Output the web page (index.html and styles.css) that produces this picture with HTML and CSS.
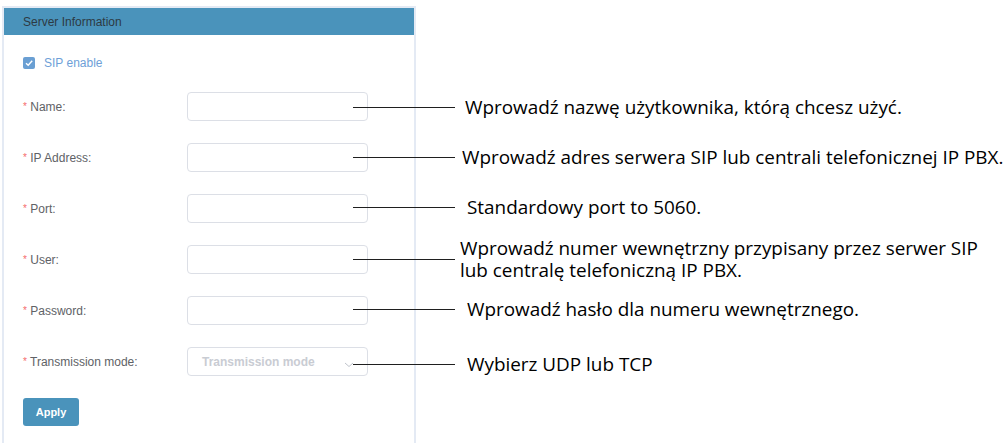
FILE: index.html
```html
<!DOCTYPE html>
<html lang="pl">
<head>
<meta charset="utf-8">
<title>Server Information</title>
<link rel="stylesheet" href="styles.css">
</head>
<body>
<div class="stage">
  <section class="panel">
    <header class="panel-head">Server Information</header>
    <div class="panel-body">
      <label class="check">
        <span class="box"><svg width="12" height="12" viewBox="0 0 12 12"><path d="M3 6.2 L5.2 8.3 L9.2 3.8" fill="none" stroke="#fff" stroke-width="1.4"/></svg></span>
        <span class="check-text">SIP enable</span>
      </label>
      <div class="form">
        <div class="row"><span class="label"><i>*</i> Name:</span><span class="input"></span></div>
        <div class="row"><span class="label"><i>*</i> IP Address:</span><span class="input"></span></div>
        <div class="row"><span class="label"><i>*</i> Port:</span><span class="input"></span></div>
        <div class="row"><span class="label"><i>*</i> User:</span><span class="input"></span></div>
        <div class="row"><span class="label"><i>*</i> Password:</span><span class="input"></span></div>
        <div class="row"><span class="label"><i>*</i> Transmission mode:</span><span class="input select"><span class="placeholder">Transmission mode</span><svg class="chev" width="10" height="6" viewBox="0 0 10 6"><path d="M1 1 L5 4.5 L9 1" fill="none" stroke="#c0c4cc" stroke-width="1"/></svg></span></div>
      </div>
      <button class="apply">Apply</button>
    </div>
  </section>
  <div class="callouts">
    <div class="callout c1"><span class="line"></span><span class="note">Wprowadź nazwę użytkownika, którą chcesz użyć.</span></div>
    <div class="callout c2"><span class="line"></span><span class="note">Wprowadź adres serwera SIP lub centrali telefonicznej IP PBX.</span></div>
    <div class="callout c3"><span class="line"></span><span class="note">Standardowy port to 5060.</span></div>
    <div class="callout c4"><span class="line"></span><span class="note multi"><span class="ln">Wprowadź numer wewnętrzny przypisany przez serwer SIP</span><span class="ln">lub centralę telefoniczną IP PBX.</span></span></div>
    <div class="callout c5"><span class="line"></span><span class="note">Wprowadź hasło dla numeru wewnętrznego.</span></div>
    <div class="callout c6"><span class="line"></span><span class="note">Wybierz UDP lub TCP</span></div>
  </div>
</div>
</body>
</html>
```
FILE: styles.css
```css
html, body {
  margin: 0;
  padding: 0;
  background: #fff;
  overflow: hidden;
}
.stage {
  position: relative;
  width: 1006px;
  height: 443px;
  padding: 6px 0 0 2px;
  box-sizing: border-box;
  font-family: "Liberation Sans", Arial, sans-serif;
}
.panel {
  width: 414px;
  height: 437px;
  box-sizing: border-box;
  border: 2px solid #e4eaf4;
  border-bottom: none;
  background: #fff;
}
.panel-head {
  height: 27px;
  background: #4a93bb;
  color: #2d3a44;
  font-size: 12px;
  line-height: 28px;
  padding-left: 19px;
}
.panel-body {
  padding: 22px 0 0 19px;
}
.check {
  display: flex;
  align-items: center;
  height: 12px;
  gap: 9px;
}
.box {
  width: 12px;
  height: 12px;
  border-radius: 2px;
  background: #6a9fd3;
  display: flex;
}
.check-text {
  font-size: 12px;
  color: #6e9fd8;
}
.form {
  margin-top: 23px;
  display: flex;
  flex-direction: column;
  gap: 22px;
}
.row {
  display: flex;
  align-items: center;
  height: 29px;
}
.label {
  width: 164px;
  font-size: 12px;
  color: #606266;
}
.label i {
  font-style: normal;
  color: #f56c6c;
  font-size: 10px;
  vertical-align: 1px;
}
.input {
  width: 181px;
  height: 29px;
  box-sizing: border-box;
  border: 1px solid #dcdfe6;
  border-radius: 4px;
  background: #fff;
}
.select {
  display: flex;
  align-items: center;
  justify-content: space-between;
  padding: 0 13px 0 14px;
}
.placeholder {
  font-size: 12px;
  font-weight: bold;
  color: #c9ccd3;
}
.chev {
  margin-top: 6px;
}
.apply {
  margin-top: 22px;
  width: 56px;
  height: 28px;
  border: none;
  border-radius: 3px;
  background: #4a93bb;
  color: #fff;
  font-family: "Liberation Sans", Arial, sans-serif;
  font-size: 11px;
  font-weight: bold;
  padding: 0;
}
.callouts {
  position: absolute;
  left: 353px;
  top: 92px;
  display: flex;
  flex-direction: column;
  font-family: "Open Sans", "Noto Sans", sans-serif;
}
.callout {
  display: flex;
  align-items: center;
  height: 30px;
}
.line {
  width: 102px;
  height: 1px;
  background: #1f1f1f;
  flex: none;
}
.note {
  font-size: 18.9px;
  line-height: 22px;
  color: #000;
  white-space: nowrap;
  margin-left: 10px;
}
.multi {
  display: flex;
  flex-direction: column;
}
.multi .ln {
  line-height: 22.5px;
}
.c2 { margin-top: 20px; }
.c2 .note { margin-left: 7px; }
.c3 { margin-top: 20px; }
.c3 .note { margin-left: 12px; }
.c4 { margin-top: 22px; }
.c4 .note { margin-left: 5px; }
.c5 { margin-top: 20px; }
.c5 .note { margin-left: 12px; }
.c6 { margin-top: 25px; }
.c6 .note { margin-left: 12px; }
```
